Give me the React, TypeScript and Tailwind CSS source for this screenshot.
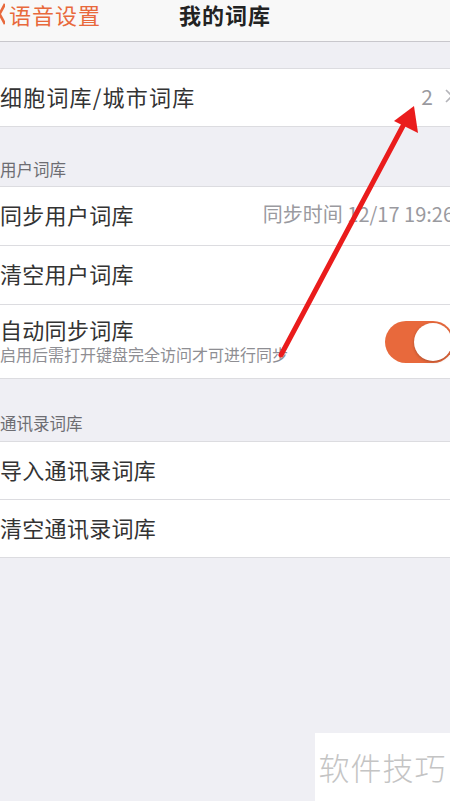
const font = { fontFamily: '"Noto Sans CJK SC", "Noto Sans", sans-serif' };

function Row({ children, last }: { children: React.ReactNode; last?: boolean }) {
  return (
    <div className={`flex items-center bg-white ${last ? "" : "border-b border-[#dcdce0]"}`}>
      {children}
    </div>
  );
}

export default function App() {
  return (
    <div
      className="relative h-[801px] w-[450px] overflow-hidden bg-[#efeff4] text-[#333333]"
      style={font}
    >
      {/* nav bar */}
      <div className="relative flex h-[42px] items-start border-b border-[#c8c7cc] bg-[#f8f8f8]">
        <div className="flex h-[28px] items-center text-[22px] leading-[28px] text-[#e8693c]">
          <svg width="6" height="22" viewBox="0 0 6 22" className="-ml-[1px] mr-[4px]">
            <path d="M6 1 L0.5 11 L6 21" fill="none" stroke="#e8693c" strokeWidth="2.6" />
          </svg>
          <span className="tracking-[1px]">语音设置</span>
        </div>
        <div className="absolute left-0 right-0 top-0 flex h-[28px] items-center justify-center">
          <span className="text-[22px] font-bold leading-[28px] tracking-[1px] text-[#222]">我的词库</span>
        </div>
      </div>

      {/* group 1 */}
      <div className="mt-[26px] border-y border-[#dcdce0]">
        <Row last>
          <div className="flex h-[57px] flex-1 items-center pb-[4px] text-[22px] leading-[28px] tracking-[1.2px]">
            细胞词库/城市词库
          </div>
          <span className="mr-[12px] pb-[4px] text-[21px] leading-[28px] text-[#9a9a9f]">2</span>
          <svg width="8" height="14" viewBox="0 0 8 14" className="-mr-[3px] mb-[4px]">
            <path d="M1 1 L7 7 L1 13" fill="none" stroke="#b5b5ba" strokeWidth="1.6" />
          </svg>
        </Row>
      </div>

      {/* user dict */}
      <div className="flex h-[59px] items-end pb-[6px] text-[16.5px] leading-[22px] text-[#6d6d72]">
        用户词库
      </div>
      <div className="border-y border-[#dcdce0]">
        <Row>
          <div className="flex h-[58px] flex-1 items-center pb-[4px] text-[22px] leading-[28px] tracking-[0.3px]">
            同步用户词库
          </div>
          <span className="-mr-[4px] pb-[4px] whitespace-nowrap text-[20px] leading-[28px] text-[#9a9a9f]">
            同步时间 12/17 19:26
          </span>
        </Row>
        <Row>
          <div className="flex h-[58px] flex-1 items-center pb-[4px] text-[22px] leading-[28px] tracking-[0.3px]">
            清空用户词库
          </div>
        </Row>
        <Row last>
          <div className="flex h-[73px] flex-1 flex-col justify-center pb-[4px]">
            <span className="text-[22px] leading-[28px] tracking-[0.3px]">自动同步词库</span>
            <span className="mt-[1px] text-[16px] leading-[20px] text-[#8e8e93]">
              启用后需打开键盘完全访问才可进行同步
            </span>
          </div>
          <div className="-mr-[4px] flex h-[42px] w-[69px] items-center justify-end rounded-full bg-[#e8693c] pr-[2px]">
            <div className="h-[38px] w-[38px] rounded-full bg-white shadow-[0_1px_3px_rgba(0,0,0,0.25)]" />
          </div>
        </Row>
      </div>

      {/* contacts */}
      <div className="flex h-[62px] items-end pb-[7px] text-[16.5px] leading-[22px] text-[#6d6d72]">
        通讯录词库
      </div>
      <div className="border-y border-[#dcdce0]">
        <Row>
          <div className="flex h-[57px] flex-1 items-center pb-[4px] text-[22px] leading-[28px] tracking-[0.3px]">
            导入通讯录词库
          </div>
        </Row>
        <Row last>
          <div className="flex h-[57px] flex-1 items-center pb-[4px] text-[22px] leading-[28px] tracking-[0.3px]">
            清空通讯录词库
          </div>
        </Row>
      </div>

      {/* annotation arrow */}
      <svg className="absolute left-0 top-0" width="450" height="801" viewBox="0 0 450 801">
        <line x1="281" y1="355" x2="404" y2="124" stroke="#ea1c1c" strokeWidth="5" strokeLinecap="round" />
        <polygon points="414,106 418,133 394,121" fill="#ea1c1c" />
      </svg>

      {/* watermark */}
      <div className="absolute bottom-0 right-0 flex h-[68px] w-[135px] items-center justify-center bg-white">
        <span className="text-[31px] font-light leading-[40px] tracking-[1px] text-[#c4c4c4]">软件技巧</span>
      </div>
    </div>
  );
}
